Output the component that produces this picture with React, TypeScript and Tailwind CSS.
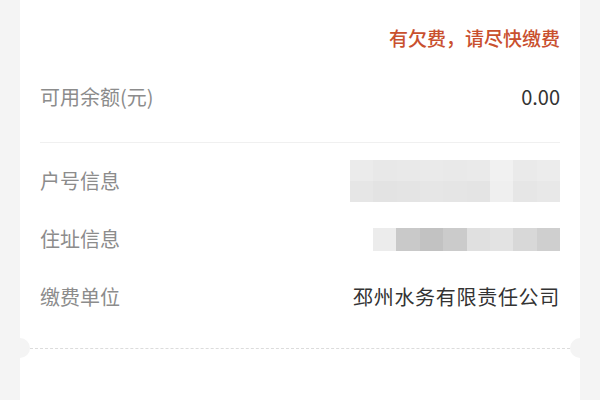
const font = { fontFamily: '"Noto Sans CJK SC", "Noto Sans", sans-serif' };

const accountTop = ["#ebebeb", "#e8e8e8", "#e9e9e9", "#eaeaea", "#e9e9e9", "#eaeaea", "#f1f1f1", "#eaeaea", "#ececec"];
const accountBottom = ["#e6e6e6", "#e3e3e3", "#e4e4e4", "#e6e6e6", "#e5e5e5", "#e4e4e4", "#efefef", "#e6e6e6", "#e8e8e8"];
const address = ["#ececec", "#c9c9c9", "#c2c2c2", "#cbcbcb", "#e0e0e0", "#e3e3e3", "#d8d8d8", "#cfcfcf"];

function Mosaic({ rows, width, height }: { rows: string[][]; width: number; height: number }) {
  return (
    <div className="flex flex-col blur-[0.6px]" style={{ width, height }}>
      {rows.map((row, i) => (
        <div key={i} className="flex flex-1">
          {row.map((c, j) => (
            <div key={j} className="flex-1" style={{ backgroundColor: c }} />
          ))}
        </div>
      ))}
    </div>
  );
}

function Row({ label, children }: { label: string; children: React.ReactNode }) {
  return (
    <div className="flex h-[58px] items-center justify-between">
      <span className="text-[20px] text-[#8c8c8c]">{label}</span>
      {children}
    </div>
  );
}

export default function App() {
  return (
    <div className="h-[400px] w-[600px] overflow-hidden bg-[#f4f4f4] px-5" style={font}>
      <div className="relative flex h-full flex-col bg-white">
        <div className="px-5">
          <div className="flex h-[76px] items-center justify-end">
            <span className="text-[19px] font-medium text-[#c9502e]">有欠费，请尽快缴费</span>
          </div>
          <div className="flex h-[42px] items-center justify-between">
            <span className="text-[20px] text-[#8c8c8c]">可用余额(元)</span>
            <span className="text-[20px] text-[#333]">0.00</span>
          </div>
          <div className="mt-6 border-t border-[#f0f0f0]" />
          <div className="pt-[9px]">
            <Row label="户号信息">
              <Mosaic rows={[accountTop, accountBottom]} width={210} height={42} />
            </Row>
            <Row label="住址信息">
              <Mosaic rows={[address]} width={187} height={23} />
            </Row>
            <Row label="缴费单位">
              <span className="text-[20px] tracking-[0.7px] text-[#333]">邳州水务有限责任公司</span>
            </Row>
          </div>
        </div>
        <div className="relative mt-[22px] px-[10px]">
          <div className="border-t border-dashed border-[#dcdcdc]" />
          <div className="absolute -left-[10px] -top-[10px] h-5 w-5 rounded-full bg-[#f4f4f4]" />
          <div className="absolute -right-[10px] -top-[10px] h-5 w-5 rounded-full bg-[#f4f4f4]" />
        </div>
      </div>
    </div>
  );
}
